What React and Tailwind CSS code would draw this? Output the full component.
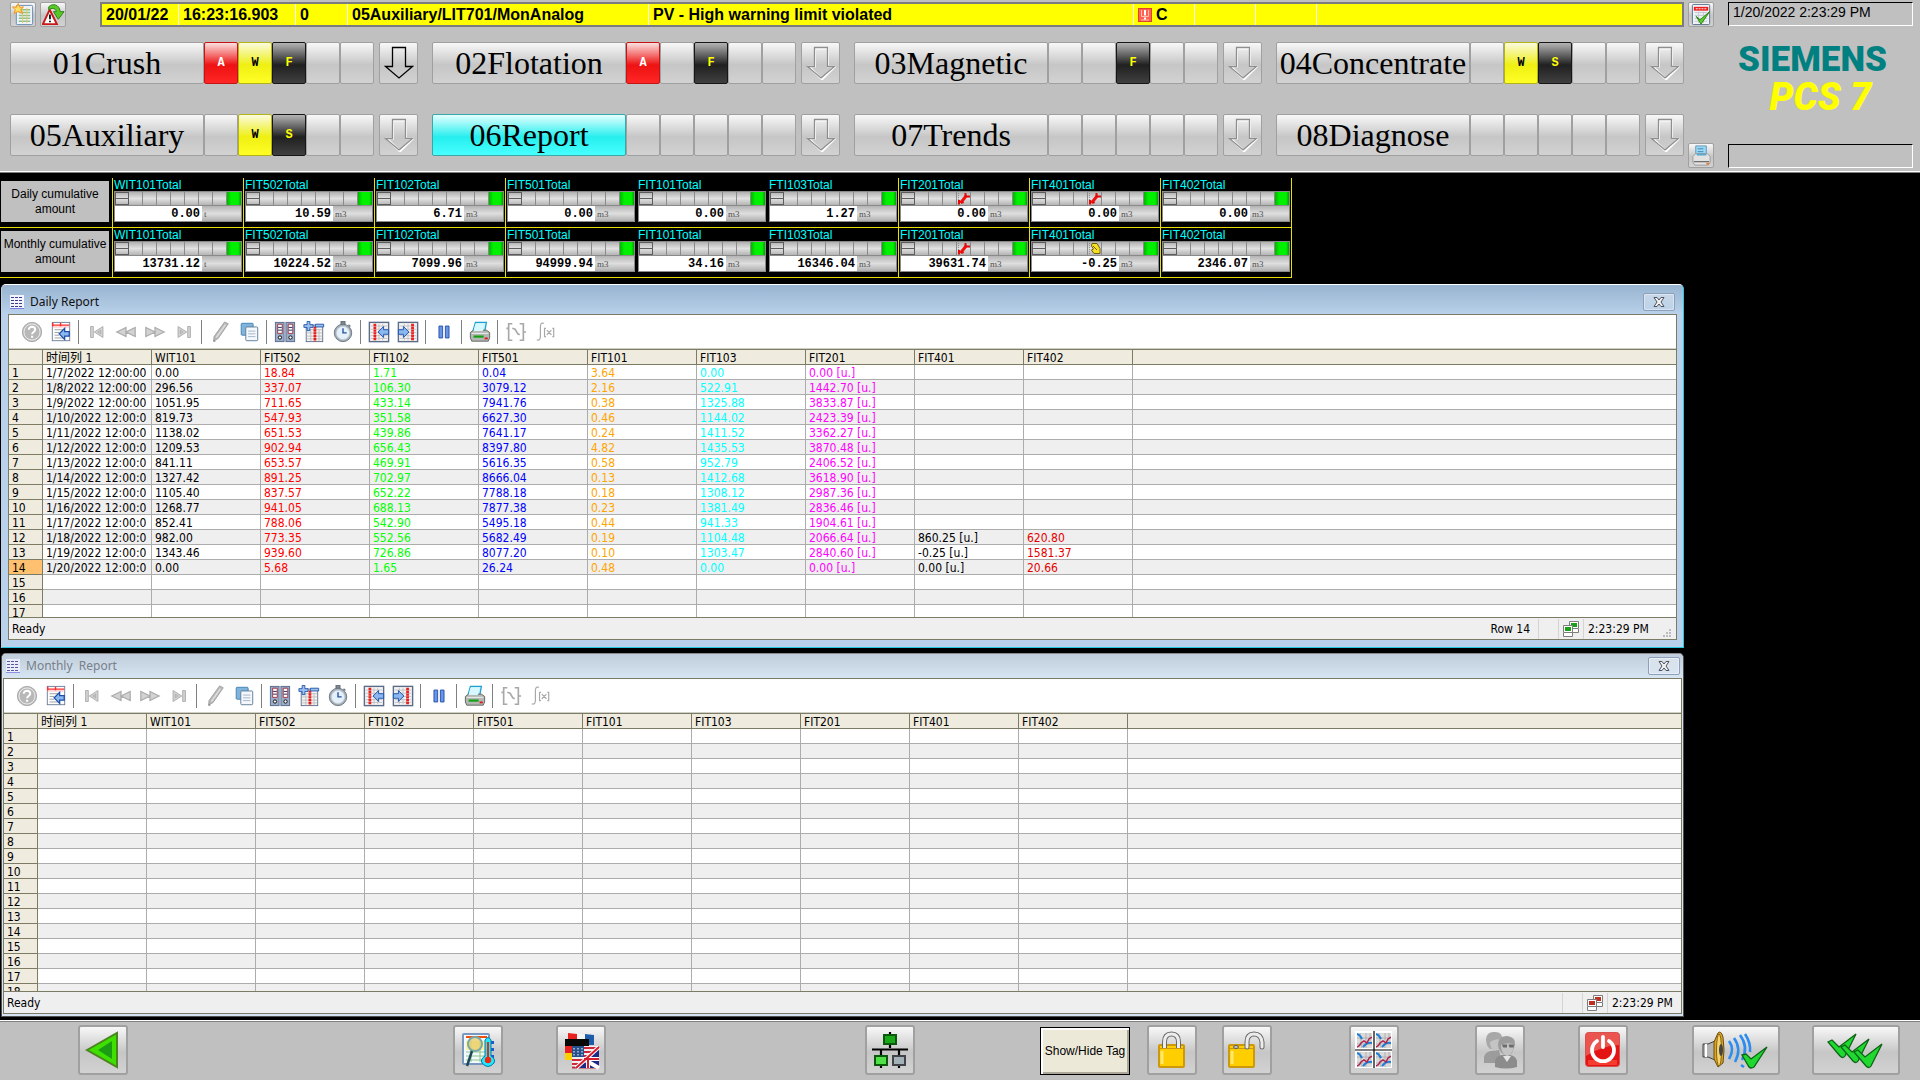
import React from 'react';
import clsx from 'clsx';

const areas = [
  { label: '01Crush', flags: ['A', 'W', 'F', '', ''], active: true },
  { label: '02Flotation', flags: ['A', '', 'F', '', ''] },
  { label: '03Magnetic', flags: ['', '', 'F', '', ''] },
  { label: '04Concentrate', flags: ['', 'W', 'S', '', ''] },
  { label: '05Auxiliary', flags: ['', 'W', 'S', '', ''] },
  { label: '06Report', flags: ['', '', '', '', ''], selected: true },
  { label: '07Trends', flags: ['', '', '', '', ''] },
  { label: '08Diagnose', flags: ['', '', '', '', ''] },
];

const FLAG_STYLES = {
  A: 'border-[#c41414] bg-linear-[180deg,#fbe0e0_0%,#ee1212_55%,#ff2626_100%] text-white',
  W: 'border-[#b4b414] bg-linear-[180deg,#fbfbe0_0%,#efef12_55%,#ffff26_100%] text-black',
  F: 'border-[#161616] bg-linear-[180deg,#b4b4b4_0%,#202020_55%,#404040_100%] text-[#ffff00]',
  S: 'border-[#161616] bg-linear-[180deg,#b4b4b4_0%,#202020_55%,#404040_100%] text-[#ffff00]',
};

const GREY_FACE = 'border-[#a0a0a0] bg-linear-[180deg,#f8f8f8_0%,#c6c6c6_55%,#d2d2d2_100%]';

const totals = [
  { title: 'Daily cumulative amount', tags: [
    ['WIT101Total', '0.00', 't'],
    ['FIT502Total', '10.59', 'm3'],
    ['FIT102Total', '6.71', 'm3'],
    ['FIT501Total', '0.00', 'm3'],
    ['FIT101Total', '0.00', 'm3'],
    ['FTI103Total', '1.27', 'm3'],
    ['FIT201Total', '0.00', 'm3', 'wrench'],
    ['FIT401Total', '0.00', 'm3', 'wrench'],
    ['FIT402Total', '0.00', 'm3'],
  ] },
  { title: 'Monthly cumulative amount', tags: [
    ['WIT101Total', '13731.12', 't'],
    ['FIT502Total', '10224.52', 'm3'],
    ['FIT102Total', '7099.96', 'm3'],
    ['FIT501Total', '94999.94', 'm3'],
    ['FIT101Total', '34.16', 'm3'],
    ['FTI103Total', '16346.04', 'm3'],
    ['FIT201Total', '39631.74', 'm3', 'wrench'],
    ['FIT401Total', '-0.25', 'm3', 'hand'],
    ['FIT402Total', '2346.07', 'm3'],
  ] },
];

const columns = [
  { name: '时间列 1', color: 'text-black' },
  { name: 'WIT101', color: 'text-black' },
  { name: 'FIT502', color: 'text-[#ff0000]' },
  { name: 'FTI102', color: 'text-[#00ff00]' },
  { name: 'FIT501', color: 'text-[#0000ff]' },
  { name: 'FIT101', color: 'text-[#ffa500]' },
  { name: 'FIT103', color: 'text-[#00ffff]' },
  { name: 'FIT201', color: 'text-[#ff00ff]' },
  { name: 'FIT401', color: 'text-black' },
  { name: 'FIT402', color: 'text-[#e60000]' },
];

const dailyRows = [
  ['1/7/2022 12:00:00', '0.00', '18.84', '1.71', '0.04', '3.64', '0.00', '0.00 [u.]'],
  ['1/8/2022 12:00:00', '296.56', '337.07', '106.30', '3079.12', '2.16', '522.91', '1442.70 [u.]'],
  ['1/9/2022 12:00:00', '1051.95', '711.65', '433.14', '7941.76', '0.38', '1325.88', '3833.87 [u.]'],
  ['1/10/2022 12:00:0', '819.73', '547.93', '351.58', '6627.30', '0.46', '1144.02', '2423.39 [u.]'],
  ['1/11/2022 12:00:0', '1138.02', '651.53', '439.86', '7641.17', '0.24', '1411.52', '3362.27 [u.]'],
  ['1/12/2022 12:00:0', '1209.53', '902.94', '656.43', '8397.80', '4.82', '1435.53', '3870.48 [u.]'],
  ['1/13/2022 12:00:0', '841.11', '653.57', '469.91', '5616.35', '0.58', '952.79', '2406.52 [u.]'],
  ['1/14/2022 12:00:0', '1327.42', '891.25', '702.97', '8666.04', '0.13', '1412.68', '3618.90 [u.]'],
  ['1/15/2022 12:00:0', '1105.40', '837.57', '652.22', '7788.18', '0.18', '1308.12', '2987.36 [u.]'],
  ['1/16/2022 12:00:0', '1268.77', '941.05', '688.13', '7877.38', '0.23', '1381.49', '2836.46 [u.]'],
  ['1/17/2022 12:00:0', '852.41', '788.06', '542.90', '5495.18', '0.44', '941.33', '1904.61 [u.]'],
  ['1/18/2022 12:00:0', '982.00', '773.35', '552.56', '5682.49', '0.19', '1104.48', '2066.64 [u.]', '860.25 [u.]', '620.80'],
  ['1/19/2022 12:00:0', '1343.46', '939.60', '726.86', '8077.20', '0.10', '1303.47', '2840.60 [u.]', '-0.25 [u.]', '1581.37'],
  ['1/20/2022 12:00:0', '0.00', '5.68', '1.65', '26.24', '0.48', '0.00', '0.00 [u.]', '0.00 [u.]', '20.66'],
];

/* ---------- toolbar icons ---------- */

const HelpIcon = () => (
  <>
    <circle cx="12" cy="12" r="10.500" fill="#b8b8b8" stroke="#a4a4a4" />
    <circle cx="12" cy="12" r="8.800" fill="none" stroke="#f0f0f0" />
    <path d="M8.500 9.600c0-4.400 7-4.200 7 0 0 2.400-3.400 2.500-3.400 4.800M12.100 16v2.400" fill="none" stroke="#fff" strokeWidth="2.200" />
  </>
);

const PropertiesIcon = () => (
  <>
    <rect x="2.500" y="1.500" width="19" height="20" fill="#fff" stroke="#6b7c96" />
    <path d="M3 4.500h18M11.500 2v4M3 2v4" stroke="#ff2a2a" strokeWidth="1.500" />
    <path d="M3 6.500h18" stroke="#ffb4b4" />
    <path d="M5 9.500h10M5 12.500h5M5 15.500h5M5 18.500h10" stroke="#9a9a9a" />
    <path d="M21 11.500v5h-5v3.500l-6-6 6-6v3.500z" fill="#8cb8f0" stroke="#1c4fa8" strokeWidth="1.400" />
  </>
);

const FirstIcon = () => (
  <path d="M5 6h3v12H5zM18.500 6v12L9 12zM16 10v4l-3-2z" fill="#d2d2d2" stroke="#adadad" />
);
const BackIcon = () => (
  <path d="M12 7v10L2 12zM22 7v10l-10-5z" fill="#d2d2d2" stroke="#adadad" strokeWidth="1.400" />
);
const ForwardIcon = () => (
  <path d="M12 7v10l10-5zM2 7v10l10-5z" fill="#d2d2d2" stroke="#adadad" strokeWidth="1.400" />
);
const LastIcon = () => (
  <path d="M16 6h3v12h-3zM5.500 6v12L15 12zM8 10v4l3-2z" fill="#d2d2d2" stroke="#adadad" />
);

const PencilIcon = () => (
  <>
    <path d="M17 1l4 2L10 19l-5 3 .5-5z" fill="#b8b8b8" stroke="#a0a0a0" />
    <path d="M18 4L8 18" stroke="#e0e0e0" strokeWidth="1.500" />
    <path d="M5 23l.3-2.500L7.500 22z" fill="#888" />
  </>
);

const CopyIcon = () => (
  <>
    <rect x="3.500" y="2.500" width="13" height="13" rx="1" fill="#7fb4dc" stroke="#3f7fb0" />
    <rect x="8.500" y="6.500" width="13" height="15" rx="1" fill="#f4f8fc" stroke="#5b7894" />
    <path d="M11 11h8M11 14h8M11 17h8" stroke="#9fb2c4" />
  </>
);

const ArchiveIcon = () => (
  <>
    <rect x="1.500" y="1.500" width="9.500" height="21" fill="#9aacc8" stroke="#56688a" />
    <rect x="13" y="1.500" width="9.500" height="21" fill="#9aacc8" stroke="#56688a" />
    <path d="M4 3.500h5v10H4zM15.500 3.500h5v10h-5z" fill="#fff" stroke="#a32b3c" />
    <path d="M4.500 7h4M4.500 10h4M16 7h4M16 10h4" stroke="#1c1c50" />
    <circle cx="6.500" cy="18" r="1.800" fill="#fff" stroke="#000" />
    <circle cx="18" cy="18" r="1.800" fill="#fff" stroke="#000" />
  </>
);

const SelectColumnsIcon = () => (
  <>
    <rect x="3.500" y="4.500" width="18" height="18" fill="#f4f4f4" stroke="#5b6c88" />
    <path d="M4 9.500h17M4 13h17M4 16.500h17M4 19.500h17M8.500 9v13M17.500 9v13" stroke="#bdbdbd" />
    <path d="M13 6v16" stroke="#e81818" strokeWidth="3" strokeDasharray="2.500 .6" />
    <path d="M4.500.5h3V4H11v3H7.500v3.500h-3V7H1V4h3.500zM13.500 3.500h9v3h-9z" fill="#9cc0f0" stroke="#2458ac" />
  </>
);

const ClockIcon = () => (
  <>
    <path d="M10 .5h4v3h-4zM18 4l2 2" fill="#8a949e" stroke="#6a747e" strokeWidth="1.500" />
    <circle cx="12" cy="13" r="9.500" fill="#a4aeb8" stroke="#6a747e" />
    <circle cx="12" cy="13" r="7.200" fill="#e4f0fa" stroke="#c6ced6" />
    <path d="M12 8v5h4" fill="none" stroke="#24509c" strokeWidth="1.500" />
  </>
);

const SheetBase = ({ redX }) => (
  <>
    <rect x="1.500" y="1.500" width="21" height="21" fill="#f4f4f4" stroke="#5b6c88" strokeWidth="1.500" />
    <path d="M3 5.500h18M3 9h18M3 12.500h18M3 16h18M3 19h18M8 3v18M12 3v18M16 3v18" stroke="#c2c2c2" />
    <path d={`M${redX} 3v18.500`} stroke="#f01c1c" strokeWidth="3" strokeDasharray="2.500 .6" />
  </>
);

const PrevColumnIcon = () => (
  <>
    <SheetBase redX={7.5} />
    <path d="M22.500 9.500v5H17v3.500L11 12l6-6v3.500z" fill="#8cb8f0" stroke="#1c4fa8" />
  </>
);
const NextColumnIcon = () => (
  <>
    <SheetBase redX={17} />
    <path d="M1.500 9.500v5H7v3.500l6-6-6-6v3.500z" fill="#8cb8f0" stroke="#1c4fa8" />
  </>
);

const PauseIcon = () => (
  <path d="M6.500 5.500h4v13h-4zM13.500 5.500h4v13h-4z" fill="#6a94e4" stroke="#2450ac" />
);

const PrinterIcon = () => (
  <>
    <path d="M7 1.500h12l-2 10.500H4z" fill="#c8f2ff" stroke="#1ea0d0" strokeWidth="1.400" />
    <path d="M1.500 12.500L5 10h14l3.500 2.500v6L21 22H3l-1.500-3.500z" fill="#b4b8b4" stroke="#5c605c" />
    <path d="M7 3h10l-2 8H5z" fill="#d8f8ff" />
    <path d="M3 13.500h18" stroke="#f0f0f0" />
    <path d="M5 17h11" stroke="#14a014" strokeWidth="2.400" />
    <path d="M17 19h3.500" stroke="#e01818" strokeWidth="2" />
  </>
);

const BracketIcon = () => (
  <path d="M8 3H4v18h4M16 3h4v18h-4M1.500 8H4M20 12h3M8 8l3 1 3 5 2 1" fill="none" stroke="#a8a8a8" strokeWidth="1.800" />
);
const FunctionIcon = () => (
  <path d="M11 2.500c-3.500-1-4 1-4 4v10c0 3-1 5-4 4M13 8h-1.500v9H13M20 8h1.500v9H20M14 10l5 5M19 10l-5 5" fill="none" stroke="#a8a8a8" strokeWidth="1.300" />
);

const toolbar = [
  ['Help', HelpIcon], ['Properties', PropertiesIcon], null,
  ['First record', FirstIcon], ['Previous record', BackIcon], ['Next record', ForwardIcon], ['Last record', LastIcon], null,
  ['Edit', PencilIcon], ['Copy', CopyIcon], null,
  ['Select archive', ArchiveIcon], ['Select columns', SelectColumnsIcon], ['Time range', ClockIcon], null,
  ['Previous column', PrevColumnIcon], ['Next column', NextColumnIcon], null,
  ['Stop', PauseIcon], null,
  ['Print', PrinterIcon], null,
  ['Define area', BracketIcon], ['Statistics', FunctionIcon],
];

/* ---------- header ---------- */

const SmallButton = ({ label, children }) => (
  <button aria-label={label} className={clsx('flex h-[25px] w-[26px] shrink-0 items-center justify-center rounded-[2px] border', GREY_FACE)}>
    <svg viewBox="0 0 24 24" className="size-[23px]">{children}</svg>
  </button>
);

const ArrowButton = ({ label, active }) => (
  <button aria-label={label} className={clsx('ml-[5px] flex w-[39px] shrink-0 items-center justify-center rounded-[2px] border', GREY_FACE)}>
    <svg viewBox="0 0 30 34" className="h-[34px] w-[30px]">
      {!active && <path d="M9 2.500h13v18h7L16 33.500 3 20.500h6z" fill="none" stroke="#fff" strokeWidth="2" />}
      <path d="M8.500 1.500h13v19h7L15 32 1.500 20.500h7z" fill="none" stroke={active ? '#000' : '#8e8e8e'} strokeWidth="1.300" />
    </svg>
  </button>
);

const AreaButton = ({ area }) => (
  <div className="flex h-[42px] min-w-0">
    <button
      className={clsx(
        "flex min-w-0 flex-1 items-center justify-center overflow-hidden rounded-[2px] border font-['Liberation_Serif',serif] text-[32px] leading-8 whitespace-nowrap text-black",
        area.selected ? 'border-[#38a8a8] bg-linear-[180deg,#e4ffff_0%,#26eeee_55%,#48ffff_100%]' : GREY_FACE
      )}
    >
      {area.label}
    </button>
    {area.flags.map((flag, i) => (
      <button
        key={i}
        aria-label={`${area.label} alarm class ${i + 1}`}
        className={clsx(
          "w-[34px] shrink-0 rounded-[2px] border font-['Liberation_Mono',monospace] text-xs font-bold",
          flag ? FLAG_STYLES[flag] : GREY_FACE
        )}
      >
        {flag}
      </button>
    ))}
    <ArrowButton label={`Expand ${area.label}`} active={area.active} />
  </div>
);

const AlarmLine = () => (
  <div className="flex h-[25px] min-w-0 flex-1 overflow-hidden border-2 border-[#7c7c7c] bg-[#ffff00] text-base leading-[21px] font-bold whitespace-nowrap text-black [&>*]:shrink-0 [&>*]:border-r [&>*]:border-white">
    <div className="w-[77px] pl-1">20/01/22</div>
    <div className="w-[117px] pl-1">16:23:16.903</div>
    <div className="w-[52px] pl-1">0</div>
    <div className="w-[301px] pl-1">05Auxiliary/LIT701/MonAnalog</div>
    <div className="w-[485px] pl-1">PV - High warning limit violated</div>
    <div className="flex w-[61px] items-center gap-1 pl-1">
      <svg viewBox="0 0 14 14" className="size-[14px]">
        <rect x=".5" y=".5" width="13" height="13" fill="#ff6050" stroke="#e04030" />
        <path d="M3.500 2v6.500h7V2M3 12h8" fill="none" stroke="#ffc0b0" />
        <path d="M7 2v5.500M7 9.500v2" stroke="#fff" strokeWidth="2" />
      </svg>
      C
    </div>
    <div className="w-[61px]" />
    <div className="w-[61px]" />
  </div>
);

const Header = () => (
  <header className="flex shrink-0 border-b border-[#808080] bg-[#c0c0c0]">
    <div className="flex h-[172px] flex-1 border-b border-white">
      <div className="min-w-0 flex-1 pt-[2px] pl-[10px]">
        <div className="flex">
          <SmallButton label="Message list">
            <rect x="4.500" y="2.500" width="17" height="20" rx="1" fill="#eef4fa" stroke="#6a8ab4" />
            <path d="M7 7h12M7 10h12M7 13h12M7 16h12M7 19h12" stroke="#8cc08c" strokeWidth="1.500" />
            <path d="M11 5v16M15.500 5v16" stroke="#e8c860" />
            <path d="M6.500.5l1.500 4 4-.5-3 3 2 4-4.500-2.200L2 11l1.500-4L.5 4l4 .5z" fill="#ffe060" stroke="#f09020" />
          </SmallButton>
          <div className="w-1" />
          <SmallButton label="Loop in alarm">
            <path d="M8 7L15.500 22H1z" fill="#fff" stroke="#c81818" strokeWidth="2" />
            <path d="M8.300 12v5M8.300 18.500v1.500" stroke="#000" strokeWidth="1.800" />
            <path d="M7 4c4-4 11-3 12 5h4l-6 8-5-8h3c-1-4-5-4-8-2z" fill="#58c828" stroke="#2c8014" />
          </SmallButton>
          <div className="w-[34px]" />
          <AlarmLine />
        </div>
        <nav className="mt-[15px] grid grid-cols-4 gap-x-[14px] gap-y-[30px]">
          {areas.map((area) => <AreaButton key={area.label} area={area} />)}
        </nav>
      </div>
      <div className="flex w-[236px] shrink-0 gap-[14px] pt-[2px] pr-[7px] pl-1">
        <div className="flex flex-col justify-between pb-[3px]">
          <SmallButton label="Acknowledge visible messages">
            <rect x="2.500" y="1.500" width="18" height="21" rx="1" fill="#eef2f6" stroke="#5c6f8c" />
            <path d="M5 10h13M5 13h13M5 16h13M5 19h13M9 9v12M14 9v12" stroke="#c0c8d0" />
            <path d="M4 4h15v4H4z" fill="#f01c1c" />
            <path d="M6 6h11" stroke="#fff" strokeDasharray="2 1" />
            <path d="M6.500 14l4 3.500L20.500 9 11.500 22z" fill="#5cd028" stroke="#2c8014" />
          </SmallButton>
          <SmallButton label="Print screen">
            <path d="M6 2h11v10H6z" fill="#9cd8f4" stroke="#6498b8" />
            <path d="M8 5h6M8 8h6" stroke="#3c88b8" />
            <path d="M3 13l3-3h12l3 3v6l-2 3H5l-2-3z" fill="#e2e2e2" stroke="#9a9a9a" />
            <path d="M7 11h10" stroke="#58a8d0" strokeWidth="2" />
            <path d="M4 18.500h16" stroke="#484848" />
            <path d="M17 20.500h3" stroke="#e08040" strokeWidth="2" />
          </SmallButton>
        </div>
        <div className="flex min-w-0 flex-1 flex-col justify-between pb-[3px]">
          <input
            readOnly
            aria-label="System time"
            value="1/20/2022 2:23:29 PM"
            className="h-6 w-full border border-t-black border-r-white border-b-white border-l-black px-1 pb-1 text-sm text-black"
          />
          <div className="flex flex-col items-center pb-3 text-center font-['Roboto',sans-serif] font-black">
            <div className="mr-4 text-[35px] leading-9 text-[#008080]">SIEMENS</div>
            <div className="text-[38px] leading-[38px] text-[#ffff00] italic">PCS 7</div>
          </div>
          <input readOnly aria-label="Logged on user" value="" className="h-6 w-full border border-t-black border-r-white border-b-white border-l-black px-1" />
        </div>
      </div>
    </div>
  </header>
);

/* ---------- totals ---------- */

const WrenchMark = () => (
  <svg viewBox="0 0 14 13" className="h-[13px] w-[14px]">
    <path d="M1.500 1v11" stroke="#909090" strokeDasharray="1 1" />
    <path d="M3.500 11l6-7.500" stroke="#f01010" strokeWidth="3" />
    <path d="M8.500 5V1M13 4.500H9.500M2 8v4.500M5 10l1.500 1" stroke="#e00808" strokeWidth="2" />
  </svg>
);

const HandMark = () => (
  <svg viewBox="0 0 14 13" className="h-[13px] w-[14px]">
    <path d="M1.500 1v11" stroke="#909090" strokeDasharray="1 1" />
    <path d="M4 1.500h5l3 5v5H6L3.500 8l2-1-2-3z" fill="#f8e020" stroke="#6c6010" />
    <path d="M5 4l4 4" stroke="#6c6010" />
  </svg>
);

const TotalCell = ({ tag, lined }) => {
  const [name, value, unit, mark] = tag;
  return (
    <div className={clsx('h-[49px] border-l pl-px', lined ? 'border-[#e8e000]' : 'border-black')}>
      <div className="h-[13px] text-xs leading-[14px] text-[#00ffff]">{name}</div>
      <div className="mr-px h-[31px] border border-[#8a8a8a]">
        <div className="grid h-[14px] grid-cols-9 border-b border-[#8a8a8a] bg-linear-[180deg,#b0b0b0_0%,#e2e2e2_50%,#b4b4b4_100%]">
          <div className="border border-[#5c5c5c]"><div className="h-[6px] border-b border-[#5c5c5c]" /></div>
          {[1, 2, 3, 4, 5, 6, 7].map((i) => (
            <div key={i} className="overflow-hidden border-r border-[#8a8a8a]">
              {i === 4 && mark === 'wrench' && <WrenchMark />}
              {i === 4 && mark === 'hand' && <HandMark />}
            </div>
          ))}
          <div className="bg-linear-[90deg,#00b400_0%,#00f000_30%,#00f000_80%,#00a000_100%]" />
        </div>
        <div className="flex h-[15px] bg-linear-[180deg,#b4b4b4_0%,#dedede_50%,#b0b0b0_100%]">
          <div className="w-[87px] bg-white pr-[2px] text-right font-['Liberation_Mono',monospace] text-xs leading-[17px] font-bold text-black">{value}</div>
          <div className="pl-[2px] font-['Liberation_Serif',serif] text-[9px] leading-[17px] text-[#505050]">{unit}</div>
        </div>
      </div>
    </div>
  );
};

const Totals = () => (
  <section className="mt-[5px] w-[1292px] border-r border-[#e8e000]">
    {totals.map((row) => (
      <div key={row.title} className="flex border-b border-[#e8e000]">
        <div className="w-[112px] shrink-0 py-[3px] pl-px">
          <div className="flex h-[41px] w-[108px] items-center bg-[#c0c0c0] text-center text-xs leading-[15px] text-black">
            <span className="w-full">{row.title}</span>
          </div>
        </div>
        <div className="grid flex-1 grid-cols-9">
          {row.tags.map((tag, i) => <TotalCell key={i} tag={tag} lined={i !== 4 && i !== 5} />)}
        </div>
      </div>
    ))}
  </section>
);

/* ---------- report windows ---------- */

const ReportTable = ({ rows, rowCount, selectedRow }) => (
  <table className="w-full table-fixed border-separate border-spacing-0 text-xs leading-3">
    <colgroup>
      <col className="w-[34px]" />
      {columns.map((c) => <col key={c.name} className="w-[109px]" />)}
      <col />
    </colgroup>
    <thead>
      <tr className="bg-[#efebde] text-left">
        <th className="h-[15px] border-r border-b border-[#7c7c64] p-0" />
        {columns.map((c) => (
          <th key={c.name} className="h-[15px] overflow-hidden border-r border-b border-[#7c7c64] p-0 pt-[2px] pl-[3px] font-normal whitespace-nowrap text-black">
            <div className="h-3">{c.name}</div>
          </th>
        ))}
        <th className="border-b border-[#7c7c64] p-0" />
      </tr>
    </thead>
    <tbody>
      {Array.from({ length: rowCount }, (_, r) => (
        <tr key={r} className={r % 2 ? 'bg-[#efefef]' : 'bg-white'}>
          <th
            scope="row"
            className={clsx(
              'h-[15px] border-r border-b border-[#7c7c64] p-0 pt-[2px] pl-[3px] text-left font-normal text-black',
              selectedRow === r + 1 ? 'bg-[#ffc070]' : 'bg-[#efebde]'
            )}
          >
            {r + 1}
          </th>
          {columns.map((c, i) => (
            <td key={c.name} className={clsx('h-[15px] overflow-hidden border-r border-b border-[#acacac] p-0 pt-[2px] pl-[3px] whitespace-nowrap', c.color)}>
              {rows[r]?.[i]}
            </td>
          ))}
          <td className="border-b border-[#acacac] p-0" />
        </tr>
      ))}
    </tbody>
  </table>
);

const ConnectionIcon = ({ color }) => (
  <svg viewBox="0 0 16 16" className="size-4">
    <path d="M6.500.5h9v7h-9zM8.500 8v3.500h7V8" fill="#fff" stroke="#7c7c7c" />
    <rect x="8" y="2" width="6" height="4" fill={color} />
    <path d="M.5 4.500h9v7h-9zM.5 12v3.500h9V12" fill="#fff" stroke="#7c7c7c" />
    <rect x="2" y="6" width="6" height="4" fill={color} />
  </svg>
);

const ReportWindow = ({ title, active, rows, rowCount, selectedRow, statusColor, className }) => (
  <section
    className={clsx(
      "ml-px flex flex-col rounded-t-[5px] border font-['DejaVu_Sans_Condensed','DejaVu_Sans','Noto_Sans_CJK_SC',sans-serif]",
      active
        ? 'border-t-white border-r-[#28c8e0] border-b-[#28c8e0] border-l-[#b9d1ea] bg-[#b9d1ea] px-[6px] pb-[7px]'
        : 'border-[#505050] border-t-[#8a8a8a] bg-[#d7e4f2] px-[1px] pb-[2px]',
      className
    )}
  >
    <div
      className={clsx(
        'flex shrink-0 items-center gap-2 rounded-t-[4px]',
        active ? '-mx-[6px] h-[29px] bg-linear-[180deg,#98b4d0,#b9d1ea] pt-1 pr-2 pl-2' : '-mx-px h-6 bg-linear-[180deg,#bfcddb,#d7e4f2] pr-[3px] pl-1'
      )}
    >
      <svg viewBox="0 0 14 14" className={clsx('size-[14px]', !active && 'opacity-80')}>
        <rect width="14" height="14" fill="#f4f4ff" />
        <path d="M1 2.500h12M1 5.500h12M1 8.500h12M1 11.500h12" stroke="#3c3c8c" strokeDasharray="3 1" />
        <path d="M0 13.500h14" stroke="#7c7ce0" />
      </svg>
      <h2 className={clsx("-ml-[2px] flex-1 font-['Noto_Sans',sans-serif] text-xs whitespace-pre", active ? 'text-[#101010]' : 'text-[#788088]')}>{title}</h2>
      <button
        aria-label={`Close ${title}`}
        className="flex h-[18px] w-8 items-center justify-center rounded-[2px] border border-[#8ca0bc] bg-linear-[180deg,#ffffff66,#ffffff22] shadow-[inset_0_0_0_1px_#ffffff66]"
      >
        <svg viewBox="0 0 12 10" className="h-[10px] w-3">
          <path d="M1 .5h3l2 2.500 2-2.500h3L8 5l3 4.500H8L6 7 4 9.500H1L4 5z" fill="#f0f0f0" stroke="#4c5460" />
        </svg>
      </button>
    </div>
    <div className="flex min-h-0 flex-1 flex-col border border-[#7c7c64]">
      <div role="toolbar" aria-label={`${title} tools`} className="flex h-[34px] shrink-0 items-center border-b border-[#d0d0c8] bg-white pl-2">
        {toolbar.map((item, i) => {
          if (!item) return <div key={i} className="mx-[3px] h-6 w-px bg-[#808080]" />;
          const [label, Icon] = item;
          return (
            <button key={i} aria-label={label} className="flex w-[29px] justify-center">
              <svg viewBox="0 0 24 24" fill="none" className="size-[22px]"><Icon /></svg>
            </button>
          );
        })}
      </div>
      <div className={clsx('overflow-hidden border-t border-b border-[#7c7c64] bg-white', active ? 'h-[269px]' : 'min-h-0 flex-1')}>
        <ReportTable rows={rows} rowCount={rowCount} selectedRow={selectedRow} />
      </div>
      <div className="flex h-[21px] shrink-0 items-center bg-[#efefef] text-xs text-black">
        <div className="flex-1 pl-[3px]">Ready</div>
        {selectedRow && <div className="pr-2">Row {selectedRow}</div>}
        <div className="h-5 w-5 border-l border-[#d4d4d4]" />
        <div className="flex h-5 w-[26px] items-center justify-center border-x border-[#d4d4d4]"><ConnectionIcon color={statusColor} /></div>
        <div className={clsx('pl-1 whitespace-nowrap', active ? 'w-[78px]' : 'w-[73px]')}>2:23:29 PM</div>
        {active && (
          <svg viewBox="0 0 10 10" className="mr-1 size-[10px] self-end fill-[#bcbcbc]">
            <path d="M7 0h2v2H7zM7 3h2v2H7zM4 3h2v2H4zM7 6h2v2H7zM4 6h2v2H4zM1 6h2v2H1z" />
          </svg>
        )}
      </div>
    </div>
  </section>
);

/* ---------- footer ---------- */

const FooterButton = ({ label, className, viewBox = '0 0 40 40', wide, children }) => (
  <button aria-label={label} className={clsx('flex h-[50px] items-center justify-center rounded-[3px] border-2', GREY_FACE, wide ? 'w-[88px]' : 'w-[50px]', className)}>
    <svg viewBox={viewBox} className={clsx('h-10', wide ? 'w-[70px]' : 'w-10')}>{children}</svg>
  </button>
);

const TrendTile = ({ x, y }) => (
  <svg x={x} y={y} width="15" height="15" viewBox="0 0 15 15" overflow="hidden">
    <rect width="15" height="15" fill="#dadada" />
    <path d="M3 0l2 15M9 0v15M0 5h15M0 11h15M13 0v8" stroke="#b0b0b0" fill="none" />
    <path d="M0 1q3 1 5 5M9 11q3-2 6-1M6 14l3-3" fill="none" stroke="#1c7cd8" strokeWidth="2" />
    <path d="M0 14q3-1 4-4l3-2 3 2 2-4 3-2" fill="none" stroke="#b0204c" strokeWidth="1.500" />
  </svg>
);

const Tick = ({ x, y }) => (
  <path transform={`translate(${x} ${y})`} d="M0 8l4-2 7 7L28 0 17 22q-2 3-5 0z" fill="#20d830" stroke="#0c6414" strokeWidth="1.300" />
);

const Footer = () => (
  <footer className="flex h-[60px] shrink-0 items-start border-t border-white bg-[#c0c0c0] pt-1 pl-[78px] shadow-[inset_0_1px_0_#808080]">
    <FooterButton label="Back">
      <path d="M4 20L34 3v34z" fill="#3ee000" stroke="#4c8420" strokeWidth="2" />
      <path d="M15 20l14-9v18z" fill="#1c9c14" />
    </FooterButton>
    <FooterButton label="Process picture by name" className="ml-[325px]">
      <rect x="5" y="4" width="26" height="30" rx="1" fill="#f4f8ff" stroke="#7898c0" strokeWidth="2" />
      <path d="M8 7h21" stroke="#f05010" strokeWidth="2" />
      <path d="M8 11h20v9H8z" fill="#fff0a0" />
      <path d="M8 22h20M8 26h20M8 30h20M13 10v22M22 10v22" stroke="#88c888" />
      <path d="M30 11h6v3h-6zM30 18h6v3h-6zM30 25h6v3h-6z" fill="#1c5cc8" />
      <circle cx="17" cy="14" r="7" fill="#e8d070cc" stroke="#78a8a8" strokeWidth="2" />
      <path d="M14 21L9 36" stroke="#20485c" strokeWidth="2.500" />
      <path d="M27 10q3-5 6 0v16q5 3 3 7-6 7-12 0-2-4 3-7z" fill="#20e8ff" stroke="#0878a8" />
      <path d="M30 12v18" stroke="#f02810" strokeWidth="2" />
      <circle cx="30" cy="30" r="3.200" fill="#f02810" />
    </FooterButton>
    <FooterButton label="Language" className="ml-[53px]">
      <path d="M7 3l26 2v10H7z" fill="#f4f4f4" />
      <path d="M7 3l9 1v10H7z" fill="#e82020" />
      <path d="M24 4l9 1v10h-9z" fill="#1c5ca8" />
      <path d="M4 9h24v8H4z" fill="#080808" />
      <path d="M4 16h24v7H4z" fill="#e82020" />
      <path d="M4 23h24v7H4z" fill="#ffd000" />
      <rect x="11" y="16" width="27" height="22" fill="#f0f0f0" />
      <path d="M11 18h27M11 22h27M11 26h27M11 30h27M11 34h27M11 37.500h27" stroke="#d02838" strokeWidth="2" />
      <path d="M11 16h12v11H11z" fill="#24508c" />
      <path d="M13 18v8M17 18v8M21 18v8" stroke="#fff" strokeDasharray="1.500 1.500" />
      <path d="M38 16v22H13z" fill="#1c2c84" />
      <path d="M38 17L15 38M24 30l14 8M38 29H22M27 27v11" stroke="#fff" strokeWidth="4" />
      <path d="M38 17L15 38M38 29H23M27 28v10" stroke="#d81c30" strokeWidth="2" />
    </FooterButton>
    <FooterButton label="Network" className="ml-[259px]">
      <path d="M20 2v16M2 19.500h36M11 19v19M29 19v19" stroke="#000" strokeWidth="2.200" />
      <rect x="14" y="5" width="12" height="9" fill="#18a818" stroke="#0c580c" strokeWidth="2" />
      <rect x="5" y="26" width="12" height="9" fill="#50e048" stroke="#0c580c" strokeWidth="2" />
      <rect x="23" y="26" width="12" height="9" fill="#a4b0b8" stroke="#404448" strokeWidth="2" />
    </FooterButton>
    <button className="mt-[2px] ml-[125px] h-12 w-[90px] border border-black bg-[#ece9d8] text-xs whitespace-nowrap text-black shadow-[inset_2px_2px_0_#fff,inset_-2px_-2px_0_#aca899]">
      Show/Hide Tag
    </button>
    <FooterButton label="Lock" className="ml-[17px]">
      <rect x="7" y="15" width="25" height="22" rx="1" fill="#ffce00" stroke="#cc980c" strokeWidth="2" />
      <path d="M7 18.500h25" stroke="#cc980c" />
      <path d="M10 21v13" stroke="#ffe870" strokeWidth="3" />
      <path d="M12.500 18v-6q0-8 7-8t7 8v6" fill="none" stroke="#686868" strokeWidth="5" />
      <path d="M12.500 18v-6q0-8 7-8t7 8v6" fill="none" stroke="#ececec" strokeWidth="3" />
    </FooterButton>
    <FooterButton label="Unlock" className="ml-[25px]">
      <rect x="2" y="15" width="25" height="22" rx="1" fill="#ffce00" stroke="#cc980c" strokeWidth="2" />
      <path d="M2 18.500h25" stroke="#cc980c" />
      <path d="M5 21v13" stroke="#ffe870" strokeWidth="3" />
      <ellipse cx="9" cy="17" rx="2.500" ry="1.500" fill="#c8c8c8" stroke="#5c5c5c" />
      <path d="M20 17v-5q0-8 7-8t8 8v5" fill="none" stroke="#686868" strokeWidth="5" strokeLinecap="round" />
      <path d="M20 17v-5q0-8 7-8t8 8v5" fill="none" stroke="#ececec" strokeWidth="3" strokeLinecap="round" />
    </FooterButton>
    <FooterButton label="Trend groups" className="ml-[77px]">
      <path d="M1 1h37v37H1z" fill="#fff" />
      <TrendTile x={3} y={3} />
      <TrendTile x={22} y={3} />
      <TrendTile x={3} y={22} />
      <TrendTile x={22} y={22} />
      <path d="M20 1v37M1 20h37" stroke="#000" strokeWidth="1.200" />
    </FooterButton>
    <FooterButton label="Users" className="ml-[76px]">
      <path d="M4 33V27q1-5 7-6l8-1 3 13z" fill="#9c9c9c" />
      <path d="M6 9q1-8 9-7 8 0 7 8l-3 9h-9Q6 16 6 9z" fill="#a8a8a8" />
      <path d="M10 12q6-4 11-2v7l-6 4q-5-2-5-9z" fill="#c4c4c4" />
      <path d="M15 37V31q1-5 7-6h8q6 1 7 6v6q-11 3-22 0z" fill="#8c8c8c" />
      <path d="M18 14q1-8 9-8 9 1 8 9l-3 8q-5 5-10 0-4-3-4-9z" fill="#9c9c9c" />
      <path d="M21 15q6-3 12-1v6q-3 6-6 6-6-2-6-11z" fill="#c4c4c4" />
      <path d="M22 14.500h5v3h-4zM28.500 14.500h5v3h-4z" fill="#6c6c6c" />
      <path d="M23 26l4 6 4-6z" fill="#e4e4e4" />
    </FooterButton>
    <FooterButton label="Exit" className="ml-[53px]">
      <rect x="2.500" y="2.500" width="34" height="34" rx="3" fill="#e41414" stroke="#d85050" />
      <path d="M3 5q0-2 2-2h29q2 0 2 2v10Q18 16 3 26z" fill="#f08078" opacity=".6" />
      <path d="M5 30h29v5H5z" fill="#ff5840" opacity=".6" />
      <path d="M14 11a11 11 0 1 0 12 0" fill="none" stroke="#fff" strokeWidth="3.800" strokeLinecap="round" />
      <path d="M20 7v10" stroke="#fff" strokeWidth="3.800" strokeLinecap="round" />
    </FooterButton>
    <FooterButton label="Acknowledge horn" className="ml-16" wide viewBox="0 0 70 40">
      <path d="M2 14h5l7-3v19l-7-3H2z" fill="#b4b4b4" stroke="#404040" />
      <path d="M5 14v13" stroke="#fff" strokeWidth="2" />
      <path d="M13 12l4-9q3-3 5 4l1 13-1 13-5 4-4-8z" fill="#d8a428" stroke="#6c4c0c" />
      <ellipse cx="18" cy="20" rx="2.500" ry="16" fill="#f4d470" stroke="#8c640c" />
      <ellipse cx="20" cy="20" rx="2" ry="6" fill="#444" />
      <path d="M28 11q6 8 0 18M33 8q8 11 1 24M39 5q9 12 2 25M44 4q6 9 5 18M40 35l3 2" fill="none" stroke="#2c8cf0" strokeWidth="2.600" />
      <path d="M41 25l4-1 5 5 16-12-13 20q-3 2-5 0z" fill="#20d830" stroke="#0c6414" strokeWidth="1.300" />
    </FooterButton>
    <FooterButton label="Acknowledge all" className="mr-[19px] ml-8" wide viewBox="0 0 70 40">
      <Tick x={7} y={4} />
      <Tick x={20} y={9} />
      <Tick x={33} y={14} />
    </FooterButton>
  </footer>
);

export default function App() {
  return (
    <div className="flex h-screen min-h-[900px] flex-col bg-black font-['Liberation_Sans',Arial,sans-serif]">
      <Header />
      <main className="flex min-h-0 flex-1 flex-col">
        <Totals />
        <div className="mt-[6px] mr-[236px] flex min-h-0 flex-1 flex-col gap-[5px] pb-[3px]">
          <ReportWindow title="Daily Report" active rows={dailyRows} rowCount={17} selectedRow={14} statusColor="#18a018" />
          <ReportWindow title="Monthly  Report" rows={[]} rowCount={18} statusColor="#c03020" className="min-h-0 flex-1" />
        </div>
      </main>
      <Footer />
    </div>
  );
}
